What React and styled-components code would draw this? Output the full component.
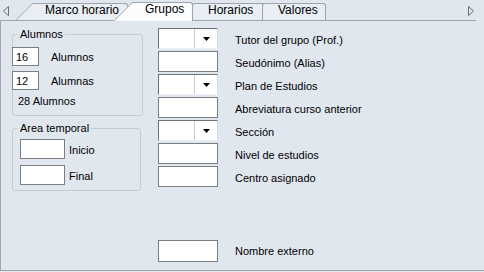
import React from 'react';
import styled, {createGlobalStyle} from "styled-components";

const GlobalStyle = createGlobalStyle`
body{
    margin:0;
    background-color:#e1e7ef;
    font-family:"Liberation Sans", Arial, sans-serif;
}
`;

const tabs = [
    {label: "Marco horario", w: 95, ml: 24, pl: 12, z: 1, slant: true},
    {label: "Grupos", w: 61, ml: 4, pl: 13, z: 5, slant: true, active: true},
    {label: "Horarios", w: 74, ml: -1, pl: 15, z: 2},
    {label: "Valores", w: 64, ml: -4, pl: 15, z: 3},
];

const fields = [
    {label: "Tutor del grupo (Prof.)", combo: true},
    {label: "Seudónimo (Alias)"},
    {label: "Plan de Estudios", combo: true},
    {label: "Abreviatura curso anterior"},
    {label: "Sección", combo: true},
    {label: "Nivel de estudios"},
    {label: "Centro asignado"},
];

const Arrow = ({right}) => (
    <ArrowBox $right={right} width="6" height="10" viewBox="0 0 6 10">
        <polygon
            points={right ? "0.5,0.5 5.5,5 0.5,9.5" : "5.5,0.5 0.5,5 5.5,9.5"}
            fill="none"
            stroke="#6b6f75"
            strokeWidth="1"
        />
    </ArrowBox>
);

const Combo = () => (
    <ComboBox>
        <ComboField/>
        <ComboButton>
            <svg width="7" height="4" viewBox="0 0 7 4">
                <polygon points="0,0 7,0 3.5,4" fill="#000"/>
            </svg>
        </ComboButton>
    </ComboBox>
);

export default function App() {
    return (
        <>
            <GlobalStyle/>
            <Container>
                <TabBar>
                    <Arrow/>
                    {tabs.map(t => (
                        <Tab key={t.label} $w={t.w} $ml={t.ml} $pl={t.pl} $z={t.z}
                             $slant={t.slant} $active={t.active}>
                            {t.label}
                        </Tab>
                    ))}
                    <Arrow right/>
                </TabBar>
                <Panel>
                    <LeftCol>
                        <GroupBox $w={131} $h={82} $pt={12}>
                            <Caption>Alumnos</Caption>
                            <CountRow>
                                <Input $w={27} $h={19} $ml={-1}>16</Input>
                                <Text $ml={12}>Alumnos</Text>
                            </CountRow>
                            <CountRow $mt={5}>
                                <Input $w={27} $h={19} $ml={-1}>12</Input>
                                <Text $ml={12}>Alumnas</Text>
                            </CountRow>
                            <Total>28 Alumnos</Total>
                        </GroupBox>
                        <GroupBox $w={129} $h={63} $pt={10} $mt={12}>
                            <Caption>Area temporal</Caption>
                            <CountRow>
                                <Input $w={45} $h={20} $ml={7}/>
                                <Text $ml={4}>Inicio</Text>
                            </CountRow>
                            <CountRow $mt={6}>
                                <Input $w={45} $h={20} $ml={7}/>
                                <Text $ml={4}>Final</Text>
                            </CountRow>
                        </GroupBox>
                    </LeftCol>
                    <RightCol>
                        {fields.map(f => (
                            <FieldRow key={f.label}>
                                {f.combo ? <Combo/> : <Input $w={60} $h={21}/>}
                                <FieldLabel>{f.label}</FieldLabel>
                            </FieldRow>
                        ))}
                        <FieldRow $mt={51}>
                            <Input $w={60} $h={22}/>
                            <FieldLabel $pt={0}>Nombre externo</FieldLabel>
                        </FieldRow>
                    </RightCol>
                </Panel>
            </Container>
        </>
    )
}

const Container = styled.div`
width:484px;
height:271px;
display:flex;
flex-direction:column;
`;

const TabBar = styled.div`
width:476px;
height:20px;
border-bottom:1px solid #a3a7ad;
display:flex;
align-items:flex-end;
`;

const ArrowBox = styled.svg`
align-self:center;
margin-left:${({$right}) => ($right ? "auto" : "3px")};
margin-right:${({$right}) => ($right ? "2px" : "0")};
margin-top:1px;
flex-shrink:0;
`;

const Tab = styled.div`
position:relative;
z-index:${({$z}) => $z};
box-sizing:border-box;
flex-shrink:0;
width:${({$w}) => $w}px;
margin-left:${({$ml}) => $ml}px;
height:${({$active}) => ($active ? "19px" : "17px")};
margin-bottom:${({$active}) => ($active ? "-1px" : "0")};
padding-left:${({$pl}) => $pl}px;
border-top:1px solid #9ea4ac;
border-right:1px solid #9ea4ac;
border-left:${({$slant}) => ($slant ? "none" : "1px solid #9ea4ac")};
border-radius:${({$slant}) => ($slant ? "0 3px 0 0" : "3px 3px 0 0")};
background:${({$active}) => ($active ? "#fbfcfe" : "#e9eef4")};
font-family:"Liberation Sans", Arial, sans-serif;
font-size:12px;
line-height:13px;
color:#000;
white-space:nowrap;

&::before{
    content:${({$slant}) => ($slant ? "''" : "none")};
    position:absolute;
    left:-9px;
    top:-1px;
    bottom:0;
    width:18px;
    border-left:1px solid #9ea4ac;
    border-top:1px solid #9ea4ac;
    background:${({$active}) => ($active ? "#fbfcfe" : "#e9eef4")};
    transform:skewX(-45deg);
    z-index:-1;
}
`;

const Panel = styled.div`
flex:1;
display:flex;
border-left:1px solid #a3a7ad;
border-bottom:1px solid #a3a7ad;
`;

const LeftCol = styled.div`
width:146px;
padding:13px 0 0 11px;
display:flex;
flex-direction:column;
`;

const GroupBox = styled.div`
position:relative;
box-sizing:border-box;
width:${({$w}) => $w}px;
height:${({$h}) => $h}px;
margin-top:${({$mt}) => $mt || 0}px;
padding-top:${({$pt}) => $pt}px;
border:1px solid #c6ccd5;
border-radius:3px;
`;

const Caption = styled.span`
position:absolute;
top:-7px;
left:5px;
padding:0 2px;
background:#e1e7ef;
font-size:11px;
line-height:13px;
`;

const CountRow = styled.div`
display:flex;
align-items:center;
margin-top:${({$mt}) => $mt || 0}px;
`;

const Input = styled.div`
box-sizing:border-box;
width:${({$w}) => $w}px;
height:${({$h}) => $h}px;
margin-left:${({$ml}) => $ml || 0}px;
flex-shrink:0;
background:#fff;
border:1px solid #7b7e82;
padding:2px 0 0 3px;
font-size:11px;
line-height:14px;
`;

const Text = styled.span`
margin-left:${({$ml}) => $ml}px;
padding-top:2px;
font-size:11px;
line-height:13px;
`;

const Total = styled.div`
margin:5px 0 0 5px;
font-size:11px;
line-height:13px;
`;

const RightCol = styled.div`
padding-top:7px;
display:flex;
flex-direction:column;
gap:2px;
`;

const FieldRow = styled.div`
display:flex;
align-items:center;
margin-top:${({$mt}) => $mt || 0}px;
`;

const FieldLabel = styled.span`
margin-left:17px;
padding-top:${({$pt}) => ($pt === undefined ? 3 : $pt)}px;
font-size:11px;
line-height:13px;
white-space:nowrap;
`;

const ComboBox = styled.div`
box-sizing:border-box;
width:60px;
height:21px;
flex-shrink:0;
display:flex;
background:#fff;
border-top:1px solid #6e7276;
border-left:1px solid #6e7276;
border-right:1px solid #d5dce5;
border-bottom:1px solid #eef1f5;
`;

const ComboField = styled.div`
flex:1;
`;

const ComboButton = styled.div`
width:22px;
display:flex;
align-items:center;
justify-content:center;
border-left:1px solid #c3ccd8;
background:#fff;
`;
